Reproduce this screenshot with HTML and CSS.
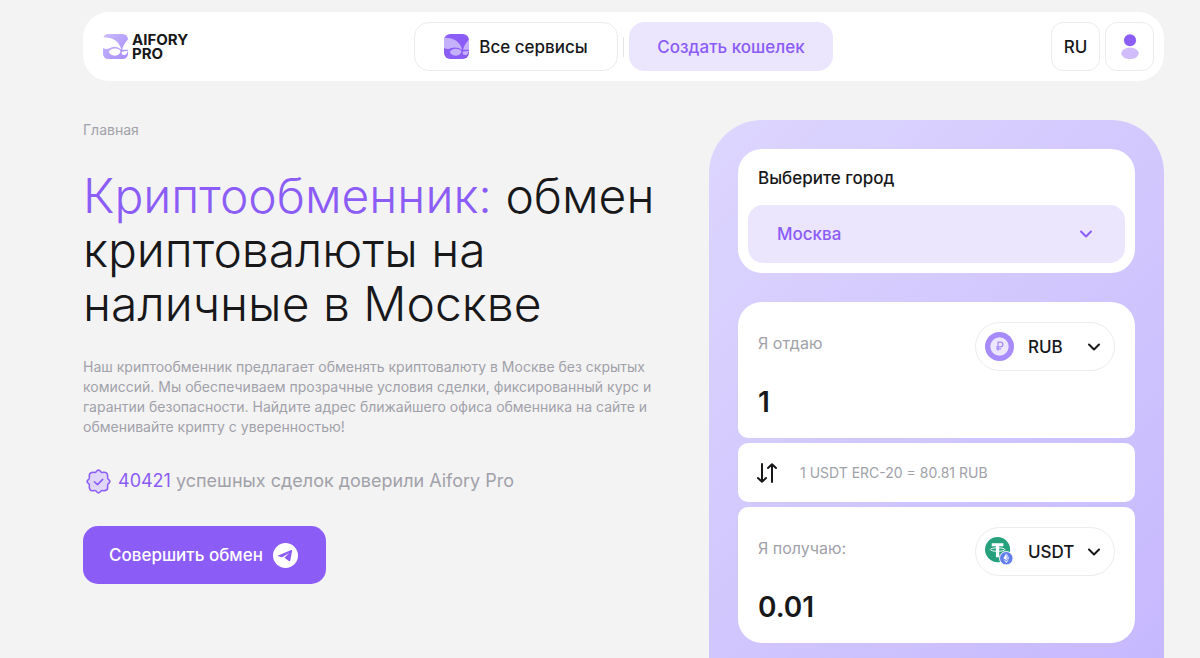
FILE: index.html
```html
<!DOCTYPE html>
<html lang="ru">
<head>
  <meta charset="UTF-8">
  <meta name="viewport" content="width=device-width, initial-scale=1">
  <title>Aifory Pro</title>
  <link rel="stylesheet" href="styles.css">
</head>
<body>
  <div class="page">
    <header class="header">
      <a class="logo" href="#">
        <svg class="icon-24" viewBox="0 0 24 24" aria-hidden="true">
          <defs>
            <linearGradient id="logo-fill" x1="0" y1="0" x2="1" y2="1">
              <stop offset="0" stop-color="#c9bcfd"/>
              <stop offset="1" stop-color="#a78bfa"/>
            </linearGradient>
          </defs>
          <rect width="24" height="24" rx="5" fill="url(#logo-fill)"/>
          <path fill="#fff" d="M0 3Q15 3 17.5 15Q13 11 8 13Q4 15.5 0 13.5Z"/>
          <path fill="#fff" d="M24 5V15L18.3 15Q19 11 24 5Z"/>
          <path fill="#fff" d="M5.5 17Q8 13 13 14Q17.5 15 16.5 18Q14 22 9 20.5Q6 19.5 5.5 17ZM18 17L24 16Q22 22 18 19.5Z"/>
        </svg>
        <span class="logo-text">AIFORY<br>PRO</span>
      </a>
      <nav class="nav">
        <button class="btn btn-outline" type="button">
          <svg class="icon-24" viewBox="0 0 24 24" aria-hidden="true">
            <rect width="24" height="24" rx="6" fill="#8b5cf6"/>
            <path fill="#c4b0fb" d="M0 3.5Q14 3 17.5 15Q12 12 7 13.5Q4 15.5 0 13.5Z"/>
            <path fill="#c4b0fb" d="M24 5V15L18.3 15Q19 11 24 5Z"/>
            <path fill="#c4b0fb" d="M5.5 17Q8 13.5 13 14.5Q17.5 15.5 16.5 18Q14 22 9 20.5Q6 19.5 5.5 17ZM18 17L24 16Q22 22 18 19.5Z"/>
          </svg>
          Все сервисы
        </button>
        <span class="nav-divider"></span>
        <a class="btn btn-light" href="#">Создать кошелек</a>
      </nav>
      <div class="header-actions">
        <button class="btn btn-square" type="button">RU</button>
        <button class="btn btn-square" type="button" aria-label="Профиль">
          <svg class="icon-24" viewBox="0 0 24 24" aria-hidden="true">
            <circle cx="12.5" cy="6" r="5.8" fill="#8b5cf6"/>
            <ellipse cx="12.5" cy="18.5" rx="8.4" ry="5.6" fill="#d1bdfb"/>
          </svg>
        </button>
      </div>
    </header>

    <main class="main">
      <section class="intro">
        <a class="breadcrumb" href="#">Главная</a>
        <h1 class="title"><span class="accent">Криптообменник:</span> обмен<br>криптовалюты на<br>наличные в Москве</h1>
        <p class="description">Наш криптообменник предлагает обменять криптовалюту в Москве без скрытых<br>комиссий. Мы обеспечиваем прозрачные условия сделки, фиксированный курс и<br>гарантии безопасности. Найдите адрес ближайшего офиса обменника на сайте и<br>обменивайте крипту с уверенностью!</p>
        <p class="deals">
          <svg class="icon-24" viewBox="0 0 24 24" fill="none" stroke="#8b5cf6" stroke-linecap="round" stroke-linejoin="round" aria-hidden="true">
            <path fill="#e0d6fa" stroke-width="1.5" d="M12 1Q13 1 14.6 3Q15 3.4 17 3.2Q20 3 20.4 5Q20.9 5.8 20.8 7Q20.6 9 21 9.4Q23 11 23 12Q23 13 21 14.6Q20.6 15 20.8 17Q21 20 19 20.4Q18.2 20.9 17 20.8Q15 20.6 14.6 21Q13 23 12 23Q11 23 9.4 21Q9 20.6 7 20.8Q4 21 3.6 19Q3.1 18.2 3.2 17Q3.4 15 3 14.6Q1 13 1 12Q1 11 3 9.4Q3.4 9 3.2 7Q3 4 5 3.6Q5.8 3.1 7 3.2Q9 3.4 9.4 3Q11 1 12 1Z"/>
            <path stroke-width="1.5" d="M8 12.2L11 15L16 10"/>
          </svg>
          <span><span class="accent">40421</span> успешных сделок доверили Aifory Pro</span>
        </p>
        <a class="cta" href="#">
          Совершить обмен
          <svg class="icon-24" viewBox="0 0 24 24" aria-hidden="true">
            <circle cx="12" cy="12" r="12" fill="#fff"/>
            <path fill="#8b5cf6" d="M5 12L17.4 6.8Q18.5 6.5 18.3 7.7L16.6 16.8Q16.3 18 15.2 17.3L11 14.2L15.6 9.4L9 13.6L5.2 12.8Q4.4 12.4 5 12Z"/>
          </svg>
        </a>
      </section>

      <form class="exchange">
        <div class="card city">
          <label class="city-label" for="city">Выберите город</label>
          <div class="city-field">
            <select class="select" id="city">
              <option>Москва</option>
            </select>
            <svg class="chevron" viewBox="0 0 14 8" aria-hidden="true"><path d="M2 1.5L7 6.5L12 1.5"/></svg>
          </div>
        </div>

        <div class="calc">
          <div class="card amount amount-top">
            <div class="amount-row">
              <label class="amount-label" for="give">Я отдаю</label>
              <div class="currency">
                <svg class="currency-icon" viewBox="0 0 30 30" aria-hidden="true">
                  <circle cx="15" cy="15" r="15" fill="#a78bfa"/>
                  <circle cx="15" cy="15" r="9.5" fill="#ede7fe"/>
                  <path fill="none" stroke="#a78bfa" stroke-width="1.3" d="M13.5 19.5V10.5H16Q18.5 10.5 18.5 13Q18.5 15.5 16 15.5H11.5M11.5 17.5H16.5"/>
                </svg>
                <select class="select" aria-label="Валюта отдачи">
                  <option>RUB</option>
                </select>
                <svg class="chevron" viewBox="0 0 14 8" aria-hidden="true"><path d="M2 1.5L7 6.5L12 1.5"/></svg>
              </div>
            </div>
            <input class="amount-input" id="give" type="text" inputmode="decimal" value="1">
          </div>

          <div class="card rate">
            <button class="swap" type="button" aria-label="Поменять местами">
              <svg class="swap-icon" viewBox="0 0 20 20" aria-hidden="true">
                <path d="M5 1V18.5M1 15L5 18.8L9 15M15 19V1.5M11 5L15 1.2L19 5"/>
              </svg>
            </button>
            <span>1 USDT ERC-20 = 80.81 RUB</span>
          </div>

          <div class="card amount amount-bottom">
            <div class="amount-row">
              <label class="amount-label" for="get">Я получаю:</label>
              <div class="currency">
                <svg class="currency-icon" viewBox="0 0 30 30" aria-hidden="true">
                  <circle cx="13" cy="13" r="13" fill="#26a17b"/>
                  <path fill="#fff" d="M7 6.5H19V9.5H14.7V21H11.3V9.5H7Z"/>
                  <ellipse cx="13" cy="13" rx="7.5" ry="1.8" fill="none" stroke="#fff"/>
                  <circle cx="22" cy="22" r="7" fill="#627eea" stroke="#fff"/>
                  <path fill="#fff" d="M22 17L25 22L22 23.8L19 22Z"/>
                  <path fill="#dce2fb" d="M19 23L22 24.8L25 23L22 27.2Z"/>
                  <path fill="#b9c5f6" d="M22 17L25 22L22 23.8Z"/>
                </svg>
                <select class="select" aria-label="Валюта получения">
                  <option>USDT</option>
                </select>
                <svg class="chevron" viewBox="0 0 14 8" aria-hidden="true"><path d="M2 1.5L7 6.5L12 1.5"/></svg>
              </div>
            </div>
            <input class="amount-input" id="get" type="text" inputmode="decimal" value="0.01">
          </div>
        </div>
      </form>
    </main>
  </div>
</body>
</html>
```

FILE: styles.css
```css
* {
  box-sizing: border-box;
}

body {
  margin: 0;
  background: #f3f3f3;
  color: #18181b;
  font-family: Inter, "Noto Sans", sans-serif;
  font-size: 16px;
}

a {
  color: inherit;
  text-decoration: none;
}

button, input, select {
  font-family: inherit;
  color: inherit;
}

button, select {
  cursor: pointer;
}

.page {
  padding: 12px 36px 0 83px;
}

.accent {
  color: #8b5cf6;
}

.icon-24 {
  width: 25px;
  height: 25px;
  flex: none;
}

/* header */
.header {
  display: grid;
  grid-template-columns: 1fr auto 1fr;
  align-items: center;
  height: 69px;
  padding: 0 10px;
  background: #fff;
  border-radius: 26px;
}

.logo {
  display: flex;
  align-items: center;
  gap: 4px;
  padding-left: 10px;
}

.logo-text {
  font-size: 15px;
  font-weight: 700;
  line-height: 14px;
}

.nav {
  display: flex;
  align-items: center;
  gap: 5px;
}

.btn {
  display: flex;
  align-items: center;
  justify-content: center;
  height: 49px;
  padding: 0;
  border: 1px solid #ececee;
  border-radius: 15px;
  background: #fff;
  font-size: 17px;
  font-weight: 500;
}

.btn-outline {
  width: 204px;
  gap: 10px;
}

.btn-light {
  width: 204px;
  border-color: #ebe5fe;
  background: #ebe5fe;
  color: #8b5cf6;
}

.btn-square {
  width: 49px;
  border-radius: 12px;
}

.nav-divider {
  width: 1px;
  height: 20px;
  background: #e4e4e7;
}

.header-actions {
  display: flex;
  justify-content: flex-end;
  gap: 5px;
}

/* content */
.main {
  display: grid;
  grid-template-columns: 1fr 455px;
  gap: 20px;
  align-items: start;
  padding-top: 39px;
}

.intro {
  display: flex;
  flex-direction: column;
  align-items: flex-start;
  white-space: nowrap;
}

.breadcrumb {
  color: #a1a1aa;
  font-size: 14px;
  line-height: 20px;
}

.title {
  margin: 29px 0 0;
  font-size: 48px;
  font-weight: 300;
  line-height: 54px;
}

.description {
  margin: 26px 0 0;
  color: #a1a1aa;
  font-size: 14px;
  line-height: 20px;
}

.deals {
  display: flex;
  align-items: center;
  gap: 7px;
  margin: 31px 0 0;
  padding-left: 3px;
  color: #a1a1aa;
  font-size: 18px;
  line-height: 26px;
}

.cta {
  display: flex;
  align-items: center;
  gap: 10px;
  height: 58px;
  margin-top: 32px;
  padding: 0 28px 0 26px;
  border-radius: 15px;
  background: #8b5cf6;
  color: #fff;
  font-size: 17px;
  font-weight: 500;
}

/* exchange form */
.exchange {
  display: flex;
  flex-direction: column;
  gap: 29px;
  padding: 29px 29px 120px;
  border-radius: 53px;
  background: linear-gradient(135deg, #ddd6fe, #c4b5fd);
}

.card {
  background: #fff;
  border-radius: 10px;
}

.select {
  flex: 1;
  min-width: 0;
  padding: 0;
  border: 0;
  outline: 0;
  appearance: none;
  background: none;
  font-size: 17px;
  font-weight: 500;
}

.chevron {
  width: 14px;
  height: 8px;
  flex: none;
  fill: none;
  stroke: currentColor;
  stroke-width: 2;
  stroke-linecap: round;
  stroke-linejoin: round;
  pointer-events: none;
}

.city {
  padding: 18px 10px 10px;
  border-radius: 24px;
}

.city-label {
  display: block;
  margin: 0 10px 16px;
  font-size: 17px;
  font-weight: 500;
  line-height: 22px;
}

.city-field {
  display: flex;
  align-items: center;
  height: 58px;
  padding: 0 32px 0 29px;
  border-radius: 15px;
  background: #ebe5fe;
  color: #8b5cf6;
}

.calc {
  display: flex;
  flex-direction: column;
  gap: 5px;
}

.amount {
  padding: 20px 20px 18px;
}

.amount-top {
  border-radius: 24px 24px 10px 10px;
}

.amount-bottom {
  border-radius: 10px 10px 24px 24px;
}

.amount-row {
  display: flex;
  justify-content: space-between;
}

.amount-label {
  padding-top: 10px;
  color: #a1a1aa;
  line-height: 22px;
}

.currency {
  display: flex;
  align-items: center;
  width: 140px;
  height: 49px;
  padding: 0 13px 0 9px;
  border: 1px solid #ececee;
  border-radius: 25px;
}

.currency-icon {
  width: 29px;
  height: 29px;
  margin-right: 14px;
  flex: none;
}

.amount-input {
  display: block;
  width: 100%;
  height: 36px;
  margin-top: 13px;
  padding: 0;
  border: 0;
  outline: 0;
  font-size: 28px;
  font-weight: 600;
}

.rate {
  display: flex;
  align-items: center;
  gap: 23px;
  height: 59px;
  padding: 0 19px;
  color: #a1a1aa;
  font-size: 14px;
}

.swap {
  display: flex;
  padding: 0;
  border: 0;
  background: none;
  color: #18181b;
}

.swap-icon {
  width: 20px;
  height: 20px;
  fill: none;
  stroke: currentColor;
  stroke-width: 2;
  stroke-linecap: round;
  stroke-linejoin: round;
}
```
